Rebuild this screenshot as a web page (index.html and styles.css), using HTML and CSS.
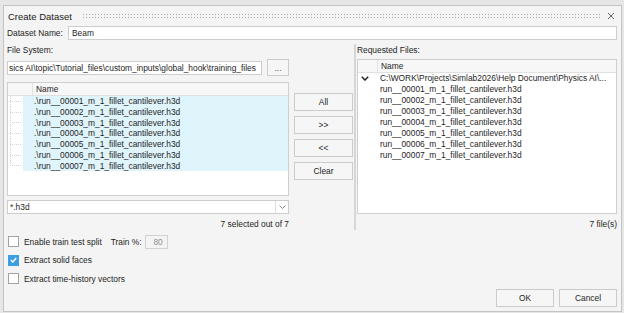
FILE: index.html
```html
<!DOCTYPE html>
<html lang="en">
<head>
    <meta charset="UTF-8">
    <title>Create Dataset</title>
    <link rel="stylesheet" href="styles.css">
</head>
<body>

    <div class="dialog">
        <div class="titlebar">
            <span class="title">Create Dataset</span>
            <span class="grip"></span>
            <svg class="close" width="8" height="8" viewBox="0 0 8 8">
                <path d="M1 1 L7 7 M7 1 L1 7" stroke="#666" stroke-width="1" fill="none"/>
            </svg>
        </div>

        <div class="name-row">
            <label>Dataset Name:</label>
            <div class="field name-field">Beam</div>
        </div>

        <div class="main">
            <div class="left">
                <div class="caption">File System:</div>
                <div class="path-row">
                    <div class="field path-field">sics AI\topic\Tutorial_files\custom_inputs\global_hook\training_files</div>
                    <button class="btn btn-browse">...</button>
                </div>

                <div class="tree tree-left">
                    <div class="tree-head">
                        <span class="head-gap"></span>
                        <span class="head-name">Name</span>
                    </div>
                    <div class="tree-row"><span class="twig"></span><span class="row-text">.\run__00001_m_1_fillet_cantilever.h3d</span></div>
                    <div class="tree-row"><span class="twig"></span><span class="row-text">.\run__00002_m_1_fillet_cantilever.h3d</span></div>
                    <div class="tree-row"><span class="twig"></span><span class="row-text">.\run__00003_m_1_fillet_cantilever.h3d</span></div>
                    <div class="tree-row"><span class="twig"></span><span class="row-text">.\run__00004_m_1_fillet_cantilever.h3d</span></div>
                    <div class="tree-row"><span class="twig"></span><span class="row-text">.\run__00005_m_1_fillet_cantilever.h3d</span></div>
                    <div class="tree-row"><span class="twig"></span><span class="row-text">.\run__00006_m_1_fillet_cantilever.h3d</span></div>
                    <div class="tree-row"><span class="twig twig-last"></span><span class="row-text">.\run__00007_m_1_fillet_cantilever.h3d</span></div>
                </div>

                <div class="combo">
                    <span class="combo-text">*.h3d</span>
                    <span class="combo-arrow">
                        <svg width="7" height="4" viewBox="0 0 7 4">
                            <path d="M0.5 0.5 L3.5 3.5 L6.5 0.5" stroke="#888" stroke-width="1" fill="none"/>
                        </svg>
                    </span>
                </div>
                <div class="status">7 selected out of 7</div>
            </div>

            <div class="move-btns">
                <button class="btn">All</button>
                <button class="btn">&gt;&gt;</button>
                <button class="btn">&lt;&lt;</button>
                <button class="btn">Clear</button>
            </div>

            <div class="splitter"></div>

            <div class="right">
                <div class="caption">Requested Files:</div>
                <div class="tree tree-right">
                    <div class="tree-head">
                        <span class="head-gap"></span>
                        <span class="head-name">Name</span>
                    </div>
                    <div class="tree-row root-row">
                        <span class="expander">
                            <svg width="8" height="5" viewBox="0 0 8 5">
                                <path d="M0.8 0.8 L4 4 L7.2 0.8" stroke="#222" stroke-width="1.5" fill="none"/>
                            </svg>
                        </span>
                        <span class="row-text">C:\WORK\Projects\Simlab2026\Help Document\Physics AI\...</span>
                    </div>
                    <div class="tree-row"><span class="row-text">run__00001_m_1_fillet_cantilever.h3d</span></div>
                    <div class="tree-row"><span class="row-text">run__00002_m_1_fillet_cantilever.h3d</span></div>
                    <div class="tree-row"><span class="row-text">run__00003_m_1_fillet_cantilever.h3d</span></div>
                    <div class="tree-row"><span class="row-text">run__00004_m_1_fillet_cantilever.h3d</span></div>
                    <div class="tree-row"><span class="row-text">run__00005_m_1_fillet_cantilever.h3d</span></div>
                    <div class="tree-row"><span class="row-text">run__00006_m_1_fillet_cantilever.h3d</span></div>
                    <div class="tree-row"><span class="row-text">run__00007_m_1_fillet_cantilever.h3d</span></div>
                </div>
                <div class="status">7 file(s)</div>
            </div>
        </div>

        <div class="options">
            <div class="option">
                <span class="check"></span>
                <span class="option-label">Enable train test split</span>
                <span class="train-label">Train %:</span>
                <span class="train-field">80</span>
            </div>
            <div class="option">
                <span class="check checked">
                    <svg width="7" height="6" viewBox="0 0 7 6">
                        <path d="M0.8 3 L2.8 5 L6.2 1" stroke="#fff" stroke-width="1.3" fill="none"/>
                    </svg>
                </span>
                <span class="option-label">Extract solid faces</span>
            </div>
            <div class="option">
                <span class="check"></span>
                <span class="option-label">Extract time-history vectors</span>
            </div>
        </div>

        <div class="footer">
            <button class="btn btn-dialog">OK</button>
            <button class="btn btn-dialog">Cancel</button>
        </div>
    </div>

</body>
</html>
```

FILE: styles.css
```css
body {
    margin: 0;
    background-color: #e6e6e6;
    font-family: "Liberation Sans", Arial, sans-serif;
    font-size: 8.4px;
    color: #1e1e1e;
}

.dialog {
    margin: 5px 2px 0 3px;
    height: 307px;
    box-sizing: border-box;
    border: 1px solid #c4c4c4;
    background-color: #f4f4f4;
    padding: 0 4px 4px 3px;
    display: flex;
    flex-direction: column;
}

.titlebar {
    height: 20px;
    display: flex;
    align-items: center;
}

.title {
    font-size: 9.5px;
    color: #222;
    padding-left: 1px;
}

.grip {
    flex: 1;
    height: 5px;
    margin: 0 7px 0 11px;
    background-image: linear-gradient(to right, #acacac 1px, transparent 1px);
    background-size: 3px 3px;
    -webkit-mask-image: linear-gradient(to bottom, #000 1px, transparent 1px);
    -webkit-mask-size: 3px 3px;
}

.close {
    margin-right: 2px;
}

.name-row {
    height: 14px;
    display: flex;
    align-items: center;
}

.name-row label {
    width: 61px;
}

.field {
    height: 14px;
    box-sizing: border-box;
    background-color: #fff;
    border: 1px solid #cdcdcd;
    line-height: 12px;
    padding-left: 3px;
    white-space: nowrap;
    overflow: hidden;
}

.name-field {
    flex: 1;
}

.main {
    margin-top: 4px;
    height: 186px;
    display: flex;
}

.left {
    width: 282px;
}

.caption {
    height: 13px;
    line-height: 13px;
    margin-bottom: 2px;
}

.path-row {
    height: 17px;
    display: flex;
    align-items: center;
    gap: 5px;
}

.path-field {
    flex: 1;
    padding-left: 1px;
}

.btn {
    font-family: inherit;
    font-size: inherit;
    color: #1e1e1e;
    background-color: #f6f6f6;
    border: 1px solid #cbcbcb;
    padding: 0;
    height: 18px;
    box-sizing: border-box;
}

.btn-browse {
    width: 22px;
    height: 17px;
    color: #555;
}

.tree {
    box-sizing: border-box;
    background-color: #fff;
    border: 1px solid #cfcfcf;
    overflow: hidden;
}

.tree-left {
    margin-top: 6px;
    height: 114px;
}

.tree-head {
    height: 13px;
    box-sizing: border-box;
    display: flex;
    background-color: #f7f7f7;
    border-bottom: 1px solid #e0e0e0;
    line-height: 12px;
}

.head-gap {
    width: 24px;
    border-right: 1px solid #e3e3e3;
}

.head-name {
    padding-left: 3px;
}

.tree-row {
    height: 10.75px;
    line-height: 10.75px;
    display: flex;
    white-space: nowrap;
}

.twig {
    width: 15px;
    flex-shrink: 0;
    background:
        repeating-linear-gradient(to right, #d4d4d4 0 1px, transparent 1px 2px) 2px 50% / 12px 1px no-repeat,
        repeating-linear-gradient(to bottom, #d4d4d4 0 1px, transparent 1px 2px) 2px 0 / 1px 100% no-repeat;
}

.twig-last {
    background:
        repeating-linear-gradient(to right, #d4d4d4 0 1px, transparent 1px 2px) 2px 50% / 12px 1px no-repeat,
        repeating-linear-gradient(to bottom, #d4d4d4 0 1px, transparent 1px 2px) 2px 0 / 1px 50% no-repeat;
}

.tree-left .row-text {
    flex: 1;
    background-color: #e0f4fb;
    padding-left: 11px;
}

.combo {
    margin-top: 4px;
    height: 14px;
    box-sizing: border-box;
    display: flex;
    background-color: #fff;
    border: 1px solid #cdcdcd;
    line-height: 12px;
}

.combo-text {
    flex: 1;
    padding-left: 2px;
}

.combo-arrow {
    width: 12px;
    border-left: 1px solid #dedede;
    display: flex;
    align-items: center;
    justify-content: center;
}

.status {
    margin-top: 4px;
    line-height: 12px;
    text-align: right;
}

.move-btns {
    width: 59px;
    margin-left: 5px;
    padding-top: 49px;
    display: flex;
    flex-direction: column;
    gap: 5px;
}

.splitter {
    width: 2px;
    margin: 0 1px;
    background-color: #d6d6d6;
}

.right {
    flex: 1;
}

.tree-right {
    height: 155px;
}

.tree-right .head-gap {
    width: 19px;
}

.tree-right .tree-row {
    height: 11px;
    line-height: 11px;
    padding-left: 22px;
}

.tree-right .root-row {
    padding-left: 3px;
}

.expander {
    width: 19px;
    display: flex;
    align-items: center;
}

.options {
    margin-top: 4px;
    display: flex;
    flex-direction: column;
    gap: 3.5px;
}

.option {
    height: 15px;
    display: flex;
    align-items: center;
    padding-left: 1px;
}

.check {
    width: 11px;
    height: 11px;
    box-sizing: border-box;
    border: 1px solid #a2a2a2;
    background-color: #fff;
    margin-right: 5px;
    display: flex;
    align-items: center;
    justify-content: center;
}

.check.checked {
    background-color: #3c9fe4;
    border-color: #3c9fe4;
}

.train-label {
    margin-left: 9px;
    width: 34px;
}

.train-field {
    width: 23px;
    height: 14px;
    box-sizing: border-box;
    border: 1px solid #d2d2d2;
    background-color: #f4f4f4;
    color: #8c8c8c;
    text-align: right;
    padding-right: 4px;
    line-height: 12px;
}

.footer {
    margin-top: auto;
    display: flex;
    justify-content: flex-end;
    gap: 5px;
}

.btn-dialog {
    width: 58px;
}
```
